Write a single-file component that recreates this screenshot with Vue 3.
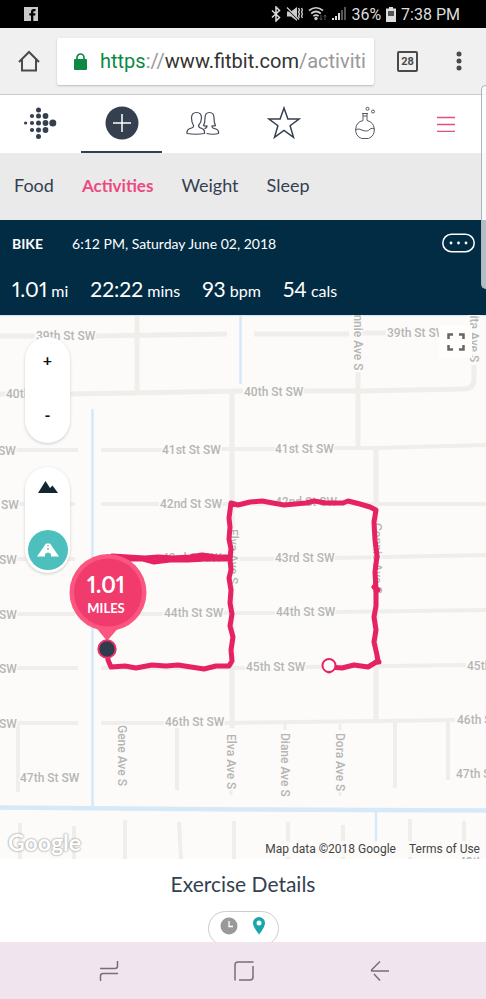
<script setup>
import { ref } from 'vue'

const tabs = ['Food', 'Activities', 'Weight', 'Sleep']
const activeTab = ref('Activities')

const stats = [
  { value: '1.01', unit: 'mi' },
  { value: '22:22', unit: 'mins' },
  { value: '93', unit: 'bpm' },
  { value: '54', unit: 'cals' },
]

const logoDots = [
  [1.6, 16, 1.6],
  [8, 9, 2.1], [8, 16, 2.1], [8, 23, 2.1],
  [14.5, 3, 2.5], [14.5, 9, 2.5], [14.5, 16, 2.5], [14.5, 23, 2.5], [14.5, 29.5, 2.5],
  [21.5, 9, 2.9], [21.5, 16, 2.9], [21.5, 23, 2.9],
  [28.8, 16, 3.5],
]

const roads = [
  { d: 'M0 336H35M95 336L227 334', w: 5 },
  { d: 'M254 334H349M362 333L386 333', w: 5 },
  { d: 'M137 315V392', w: 5 },
  { d: 'M0 394L70 394L243 391M303 391H358L464 389Q474 389 474 379V365', w: 5 },
  { d: 'M358 372V447', w: 5 },
  { d: 'M14 450H78M101 450H162M221 449H275M334 448L376 448L486 445', w: 4 },
  { d: 'M376 448V721', w: 5 },
  { d: 'M232 393V728', w: 5 },
  { d: 'M19 504H75M101 504H159M221 504H486', w: 4 },
  { d: 'M17 559H75M101 559H275M334 558L486 555', w: 4 },
  { d: 'M17 614H75M101 614H163M222 613H275M335 612L486 610', w: 4 },
  { d: 'M17 668H78M101 668H245M305 667L466 665', w: 4 },
  { d: 'M17 723H78M101 723H165M224 723L376 721L455 720', w: 4 },
  { d: 'M18 725V792M177 728V790M395 722V788M448 722V780', w: 4 },
  { d: 'M285 724V730M340 724V730M340 790V796M231 790V795', w: 3 },
  { d: 'M20 823V859M74 826V859M125 820V859M179 822L181 859M234 821V859M288 822V859M343 825V859M410 819V859M464 821V859', w: 4 },
]

const streets = [
  ['39th St SW', 36, 340], ['39th St SW', 387, 337],
  ['40th', 6, 398], ['40th St SW', 244, 396],
  ['SW', -2, 455], ['41st St SW', 162, 454], ['41st St SW', 275, 453],
  ['SW', 1, 509], ['42nd St SW', 160, 508], ['42nd St SW', 275, 506],
  ['SW', -1, 564], ['43rd St SW', 162, 562], ['43rd St SW', 275, 562],
  ['SW', -1, 619], ['44th St SW', 164, 617], ['44th St SW', 276, 616],
  ['SW', -1, 673], ['45th St SW', 246, 671], ['45th St', 467, 670],
  ['SW', -1, 728], ['46th St SW', 165, 726], ['46th St', 457, 724],
  ['47th St SW', 20, 782], ['47th St', 456, 778], ['48th St', 459, 866],
]

const avenues = [
  ['Bonnie Ave S', 354, 300], ['Juanita Ave S', 470, 289],
  ['Gene Ave S', 118, 725], ['Elva Ave S', 227, 734], ['Elva Ave S', 229, 529],
  ['Diane Ave S', 281, 733], ['Dora Ave S', 336, 733], ['Connie Ave S', 373, 523],
]
</script>

<template>
  <div class="screen">
    <header class="status">
      <svg class="fb" viewBox="0 0 14 14" aria-hidden="true">
        <rect width="14" height="14" fill="#c9c9c9" />
        <path d="M7 14V8.400H5.300V6.200H7V4.800Q7 2 9.700 2H11.500V4.200H10.300Q9.300 4.200 9.300 5.200V6.200H11.500L11.200 8.400H9.300V14Z" fill="#000" />
      </svg>
      <div class="status-right">
        <svg width="10" height="16" viewBox="0 0 10 16" aria-hidden="true">
          <path d="M1 4.500L8.500 11.500L5 15V1L8.500 4.500L1 11.500" fill="none" stroke="#ddd" stroke-width="1.500" />
        </svg>
        <svg width="17" height="16" viewBox="0 0 17 16" aria-hidden="true">
          <path d="M1 5.500H5L11 1V15L5 10.500H1Z" fill="#ccc" />
          <path d="M1 2.500L12 13.500" stroke="#000" stroke-width="1.200" />
          <path d="M1 1.500L13 13.500" stroke="#ccc" stroke-width="1.200" />
          <path d="M12.500 2l1 2-1 2 1 2-1 2 1 2M15.500 2l1 2-1 2 1 2-1 2 1 2" fill="none" stroke="#ccc" stroke-width="1.400" />
        </svg>
        <svg width="19" height="16" viewBox="0 0 19 16" aria-hidden="true">
          <g fill="none" stroke="#ccc" stroke-width="1.700">
            <path d="M1 4.500Q8 -1 15 4.500M3.200 7.500Q8 3.500 12.800 7.500M5.300 10.200Q8 8 10.700 10.200" />
          </g>
          <circle cx="8" cy="12.500" r="1.700" fill="#ccc" />
          <path d="M13 9V14M11.500 12.500L13 14L14.500 12.500M17 14V9M15.500 10.500L17 9L18.500 10.500" fill="none" stroke="#555" />
        </svg>
        <svg width="14" height="14" viewBox="0 0 14 14" aria-hidden="true">
          <path d="M0 11h2v2H0zM3 9h2v4H3zM6 6h2v7H6z" fill="#ddd" />
          <path d="M9 3h2v10H9zM12 0h2v13h-2z" fill="#555" />
        </svg>
        <span>36%</span>
        <svg width="10" height="15" viewBox="0 0 10 15" aria-hidden="true">
          <path d="M3 0h4v1.500H10V15H0V1.500H3z" fill="#ddd" />
          <path d="M2 4h6v5H2z" fill="#555" />
        </svg>
        <span>7:38 PM</span>
      </div>
    </header>

    <div class="browser">
      <button class="plain home" aria-label="Home">
        <svg width="22" height="22" viewBox="0 0 22 22"><path d="M1 12L11 2L21 12M4 9.500V20.500H18V9.500" fill="none" stroke="#4a4a4a" stroke-width="2" /></svg>
      </button>
      <div class="address">
        <svg class="lock" width="13" height="17" viewBox="0 0 13 17" aria-hidden="true">
          <rect y="6" width="13" height="11" rx="1" fill="#0c8a45" />
          <path d="M3 7V4.500a3.500 3.500 0 0 1 7 0V7" fill="none" stroke="#0c8a45" stroke-width="1.700" />
        </svg>
        <div class="url" role="textbox" tabindex="0" aria-label="Address"><span class="scheme">https</span><span class="dim">://</span>www.fitbit.com<span class="dim">/activities</span></div>
      </div>
      <button class="plain tab-count" aria-label="Open tabs"><span>28</span></button>
      <button class="plain more" aria-label="More">
        <svg width="6" height="20" viewBox="0 0 6 20"><g fill="#4a4a4a"><circle cx="3" cy="3" r="2.500" /><circle cx="3" cy="10" r="2.500" /><circle cx="3" cy="17" r="2.500" /></g></svg>
      </button>
    </div>

    <nav class="site-nav" aria-label="Site">
      <a href="#" aria-label="Dashboard">
        <svg width="34" height="33" viewBox="0 0 34 33"><circle v-for="(d, i) in logoDots" :key="i" :cx="d[0]" :cy="d[1]" :r="d[2]" fill="#363f50" /></svg>
      </a>
      <a href="#" class="current" aria-label="Log">
        <svg width="34" height="34" viewBox="0 0 34 34"><circle cx="17" cy="17" r="16.500" fill="#343f50" /><path d="M8 17H26M17 8V26" stroke="#fff" stroke-width="1.500" /></svg>
      </a>
      <a href="#" aria-label="Community">
        <svg width="34" height="24" viewBox="0 0 34 24"><g fill="none" stroke="#444a55" stroke-width="1.200" stroke-linejoin="round">
          <path d="M1 22.500Q.5 18.500 4 17.500Q8 16.700 7.500 14.500Q5.500 11 5.500 7Q5.500 1.500 10.500 1.500Q15.500 1.500 15.500 7Q15.500 11 12.500 14.500Q12.500 16.700 16 17.500Q19 18.500 18.500 22.500Q10 24 1 22.500Z" />
          <path d="M20.500 22.500Q27 24 32.500 22.500Q33 19 30 18Q25.500 17.300 26 14.800Q29 15 29.500 14.500Q28 12 28 7Q28 1.500 23.500 1.500Q19 1.500 19 7Q19 12 17.500 14.500Q19 15.500 21 14.800Q21 17 18.500 17.700" />
        </g></svg>
      </a>
      <a href="#" aria-label="Favourites">
        <svg width="34" height="34" viewBox="0 0 34 34"><path d="M17 2L20.900 13H32L23.100 19.700L26.500 31.300L17 24.500L7.500 31.300L10.900 19.700L2 13H13.100Z" fill="none" stroke="#363f50" stroke-width="1.500" /></svg>
      </a>
      <a href="#" aria-label="Labs">
        <svg width="24" height="34" viewBox="0 0 24 34"><g fill="none" stroke="#555a62" stroke-width="1">
          <path d="M9 7.500H15M10 7.500V14.500A9.500 9.500 0 0 0 8.500 32.500H15.500A9.500 9.500 0 0 0 14 14.500V7.500M10 10H14M2.500 23.500Q6 22 10 24.500Q15 26 17 23Q19 21.500 21.500 23" />
          <circle cx="14.500" cy="2.800" r="1.500" /><circle cx="20" cy="5.500" r="1.500" />
        </g></svg>
      </a>
      <a href="#" aria-label="Menu">
        <svg width="18" height="17" viewBox="0 0 18 17"><path d="M0 2.500H18M0 9.500H18M0 16.500H18" stroke="#e0507f" stroke-width="1.300" /></svg>
      </a>
    </nav>

    <nav class="tabs" aria-label="Logs">
      <a v-for="t in tabs" :key="t" href="#" :class="{ active: t === activeTab }" @click.prevent="activeTab = t">{{ t }}</a>
    </nav>

    <section class="summary">
      <div class="summary-top">
        <strong>BIKE</strong>
        <span>6:12 PM, Saturday June 02, 2018</span>
        <button class="plain options" aria-label="Options">
          <svg width="33" height="20" viewBox="0 0 33 20"><rect x=".8" y="1.300" width="31.400" height="17.400" rx="8.700" fill="none" stroke="#fff" stroke-width="1.500" /><g fill="#fff"><circle cx="9" cy="10" r="1.400" /><circle cx="16.500" cy="10" r="1.400" /><circle cx="24" cy="10" r="1.400" /></g></svg>
        </button>
      </div>
      <ul class="stats">
        <li v-for="s in stats" :key="s.unit"><b>{{ s.value }}</b> {{ s.unit }}</li>
      </ul>
    </section>

    <section class="map" aria-label="Route map">
      <svg class="map-canvas" viewBox="0 315 486 544">
        <rect y="315" width="486" height="544" fill="#fcfbf9" />
        <path v-for="(r, i) in roads" :key="i" :d="r.d" :stroke-width="r.w" fill="none" stroke="#efeeeb" />
        <g fill="none" stroke="#d5e9f8">
          <path d="M0 315.500H486" stroke-width="1.500" />
          <path d="M240.500 315V384M92.500 409V808M376 810V843" stroke-width="2.500" />
          <path d="M0 807.500L243 809.500L486 810.500" stroke-width="4.500" />
        </g>
        <g class="label">
          <text v-for="(s, i) in streets" :key="i" :x="s[1]" :y="s[2]">{{ s[0] }}</text>
          <text v-for="(a, i) in avenues" :key="'a' + i" :transform="`translate(${a[1]} ${a[2]}) rotate(90)`">{{ a[0] }}</text>
        </g>
        <g fill="none" stroke="#e72262" stroke-width="5" stroke-linejoin="round" stroke-linecap="round">
          <path d="M107 650L108 660L111 667L125 666L136 668L152 665L166 666L178 665L191 667L204 669L216 666L229 666L232 661L231 650L233 637L230 626L232 614L230 603L231 590L229 578L231 570L230 559L231 549L229 539L230 527L229 518L231 503L238 505L250 502L262 501L284 505L306 503L314 501L326 503L343 503L348 501L360 504L370 507L376 510L374 522L375 540L377 556L375 572L376 590L376 606L374 617L376 630L374 642L377 655L378 661L368 667L354 665L342 668L329 667" />
          <path d="M112 556L128 557L145 558L158 557L174 558L190 557L202 555L216 557L230 557" />
          <path d="M128 559L143 559L154 562L170 560L188 560L206 559L229 559" />
          <path d="M329 667V671M374 587L378 590M376 662H379" />
        </g>
        <circle cx="329" cy="665.500" r="6.500" fill="#fff" stroke="#e72262" stroke-width="2" />
        <g>
          <path d="M94 625L107 641L121 625Z" fill="#fb5680" />
          <circle cx="108" cy="592.500" r="38.500" fill="#fb5680" />
          <circle cx="108" cy="592.500" r="34" fill="#f23b6d" />
          <text class="pin-value" x="106" y="593">1.01</text>
          <text class="pin-unit" x="106" y="613">MILES</text>
          <circle cx="107" cy="649" r="8.700" fill="#303b4e" stroke="#e93467" stroke-width="2" />
        </g>
      </svg>

      <div class="controls">
        <div class="pill zoom">
          <button class="plain" aria-label="Zoom in">+</button>
          <button class="plain" aria-label="Zoom out">-</button>
        </div>
        <div class="pill layers">
          <button class="plain" aria-label="Terrain">
            <svg width="22" height="14" viewBox="0 0 22 14"><path d="M1 13L8.500 1L13 8L15.500 5.500L21 13Z" fill="#12262f" /></svg>
          </button>
          <button class="plain road" aria-label="Road map">
            <svg width="22" height="14" viewBox="0 0 22 14"><path d="M0 13.500L9 .5H13L22 13.500H14V11Q11 8 8 11V13.500Z" fill="#fff" /><path d="M10.500 2h1l.2 1.500h-1.400zM10.300 5h1.400l.2 1.500H10.100z" fill="#4dbfbd" /></svg>
          </button>
        </div>
      </div>
      <button class="plain fullscreen" aria-label="Full screen">
        <svg width="18" height="18" viewBox="0 0 18 18"><path d="M1.500 6V1.500H6M12 1.500H16.500V6M16.500 12V16.500H12M6 16.500H1.500V12" fill="none" stroke="#666" stroke-width="2.500" /></svg>
      </button>
      <span class="google">Google</span>
      <div class="attribution"><span>Map data ©2018 Google</span><a href="#">Terms of Use</a></div>
    </section>

    <section class="details">
      <h2>Exercise Details</h2>
      <div class="toggle">
        <button class="plain" aria-label="By time">
          <svg width="18" height="18" viewBox="0 0 18 18"><circle cx="9" cy="9" r="8.500" fill="#999" /><path d="M9 4V9.500H13" fill="none" stroke="#fff" stroke-width="1.300" /></svg>
        </button>
        <button class="plain" aria-label="By place">
          <svg width="12" height="18" viewBox="0 0 12 18"><path d="M6 17.500Q0 10 0 6A6 6 0 0 1 12 6Q12 10 6 17.500Z" fill="#17a6ab" /><circle cx="6" cy="6" r="2.500" fill="#fff" /></svg>
        </button>
      </div>
    </section>

    <footer class="system-nav">
      <button class="plain" aria-label="Recent apps">
        <svg width="20" height="22" viewBox="0 0 20 22"><path d="M1 8.500H16Q18.500 8.500 18.500 6V1M19 13.500H4Q1.500 13.500 1.500 16V21" /></svg>
      </button>
      <button class="plain" aria-label="Home screen">
        <svg width="20" height="20" viewBox="0 0 20 20"><path d="M1 19.500V4Q1 1 4 1H19.500M19 5V16Q19 19 16 19H5" /></svg>
      </button>
      <button class="plain" aria-label="Back">
        <svg width="20" height="20" viewBox="0 0 20 20"><path d="M10 .5L2 8.500Q1 10 2 10H19M4 13L10 19.500" /></svg>
      </button>
    </footer>
    <span class="scroll-handle" aria-hidden="true"></span>
  </div>
</template>

<style>
body {
  margin: 0;
}
</style>

<style scoped>
.screen {
  position: relative;
  display: flex;
  flex-direction: column;
  height: 100vh;
  overflow: hidden;
  background: #fff;
  color: #343f50;
  font-family: Lato, "Liberation Sans", sans-serif;
}
.screen > * {
  flex-shrink: 0;
}
svg {
  display: block;
}
a {
  color: inherit;
  text-decoration: none;
}
.plain {
  display: flex;
  align-items: center;
  justify-content: center;
  padding: 0;
  border: 0;
  background: none;
  color: inherit;
  font: inherit;
}
.status {
  display: flex;
  align-items: center;
  justify-content: space-between;
  height: 28px;
  padding: 0 26px 0 24px;
  background: #000;
  color: #ddd;
  font-family: Roboto, sans-serif;
  font-size: 16px;
}
.fb {
  width: 14px;
  height: 14px;
}
.status-right {
  display: flex;
  align-items: center;
  gap: 5px;
}
.browser {
  display: flex;
  align-items: center;
  box-sizing: border-box;
  height: 67px;
  padding: 0 24px 0 18px;
  border-bottom: 1px solid #ccc;
  background: #f0f0f0;
  font-family: Roboto, sans-serif;
}
.address {
  display: flex;
  flex: 1;
  align-items: center;
  gap: 13px;
  min-width: 0;
  height: 47px;
  margin: 0 23px 0 17px;
  padding: 0 9px 0 17px;
  border-radius: 2px;
  background: #fff;
  box-shadow: 0 1px 2px #bbb;
}
.lock {
  flex-shrink: 0;
}
.url {
  overflow: hidden;
  color: #333;
  font-size: 20px;
  white-space: nowrap;
}
.scheme {
  color: #0c8a45;
}
.dim {
  color: #999;
}
.tab-count {
  box-sizing: border-box;
  width: 21px;
  height: 21px;
  margin-right: 38px;
  border: 2px solid #4a4a4a;
  border-radius: 2px;
  color: #4a4a4a;
  font-size: 11px;
  font-weight: 700;
}
.site-nav {
  display: grid;
  grid-template-columns: repeat(6, 1fr);
  height: 58px;
}
.site-nav a {
  display: flex;
  align-items: center;
  justify-content: center;
  border-bottom: 2px solid transparent;
}
.site-nav .current {
  border-color: #343f50;
}
.tabs {
  display: flex;
  align-items: baseline;
  gap: 28px;
  box-sizing: border-box;
  height: 67px;
  padding: 21px 14px 0;
  background: #eaeaea;
  font-size: 18px;
  line-height: 22px;
}
.tabs .active {
  color: #ec4982;
  font-size: 17px;
  font-weight: 700;
}
.summary {
  box-sizing: border-box;
  height: 95px;
  padding: 11px 11px 0 12px;
  background: #022c43;
  color: #fff;
}
.summary-top {
  display: flex;
  align-items: center;
  gap: 29px;
  height: 24px;
  font-size: 14px;
}
.options {
  margin-left: auto;
}
.stats {
  display: flex;
  align-items: baseline;
  gap: 22px;
  margin: 21px 0 0;
  padding: 0;
  list-style: none;
  font-size: 16px;
  font-variant-numeric: proportional-nums;
}
.stats b {
  font-size: 21px;
  font-weight: 400;
}
.map {
  position: relative;
}
.map-canvas {
  width: 100%;
  height: auto;
}
.label {
  fill: #b5b6b4;
  stroke: #fcfbf9;
  stroke-width: 3px;
  paint-order: stroke;
  font-family: Roboto, sans-serif;
  font-size: 12px;
  font-weight: 500;
}
.pin-value,
.pin-unit {
  fill: #fff;
  font-weight: 700;
  text-anchor: middle;
}
.pin-value {
  font-size: 22px;
  font-variant-numeric: proportional-nums;
}
.pin-unit {
  font-size: 13px;
}
.controls {
  position: absolute;
  top: 22px;
  left: 25px;
  display: flex;
  flex-direction: column;
  gap: 24px;
  color: #111;
}
.pill {
  display: flex;
  flex-direction: column;
  justify-content: space-between;
  align-items: center;
  box-sizing: border-box;
  width: 45px;
  height: 106px;
  border-radius: 23px;
  background: #fff;
  box-shadow: 0 1px 3px #ccc;
}
.zoom {
  padding: 13px 0 19px;
  font-size: 16px;
  font-weight: 700;
}
.layers {
  padding: 13px 0 3px;
}
.road {
  width: 40px;
  height: 40px;
  border-radius: 50%;
  background: #4dbfbd;
}
.fullscreen {
  position: absolute;
  top: 10px;
  right: 14px;
  width: 33px;
  height: 33px;
  background: #fffefd;
}
.google {
  position: absolute;
  bottom: 3px;
  left: 8px;
  color: #fff;
  font-size: 23px;
  font-weight: 700;
  text-shadow: 0 0 2px #999, 0 0 2px #aaa;
}
.attribution {
  position: absolute;
  right: 0;
  bottom: 2px;
  display: flex;
  gap: 13px;
  padding: 0 6px;
  background: #fcfbf9cc;
  color: #444;
  font-family: Roboto, sans-serif;
  font-size: 12px;
  line-height: 16px;
}
.details {
  display: flex;
  flex: 1 0 0;
  flex-direction: column;
  align-items: center;
  gap: 14px;
  min-height: 0;
  padding-top: 12px;
  overflow: hidden;
}
.details h2 {
  margin: 0;
  font-size: 21px;
  font-weight: 400;
  line-height: 26px;
}
.toggle {
  display: flex;
  flex-shrink: 0;
  align-items: flex-start;
  gap: 15px;
  height: 28px;
  padding: 5px 13px 0 11px;
  border: 1px solid #ccc;
  border-radius: 20px;
}
.system-nav {
  display: flex;
  align-items: center;
  justify-content: space-around;
  height: 57px;
  padding: 0 38px 0 41px;
  background: #f0e5ef;
}
.system-nav svg {
  fill: none;
  stroke: #7a6c7a;
  stroke-width: 1.500px;
}
.scroll-handle {
  position: absolute;
  top: 85px;
  right: 0;
  box-sizing: border-box;
  width: 5px;
  height: 204px;
  border: 1px solid #aab4bc;
  border-right: 0;
  border-radius: 5px 0 0 5px;
  background: #ffffffb0;
}
</style>
